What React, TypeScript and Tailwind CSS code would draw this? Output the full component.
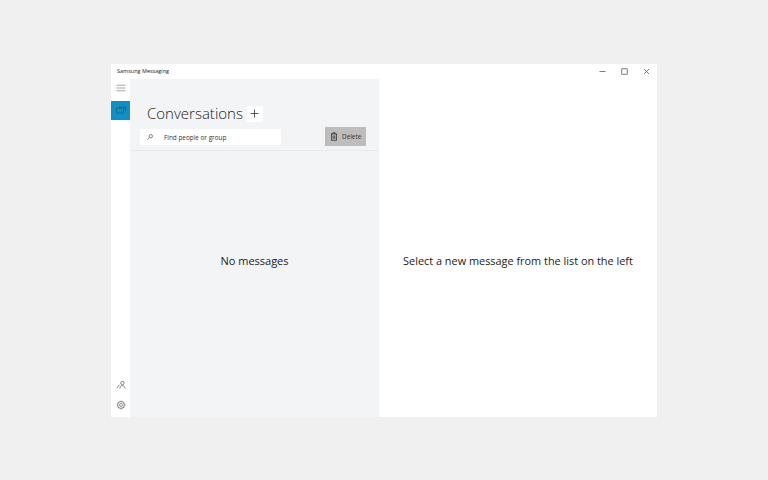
import React from "react";

export default function App() {
  return (
    <div className="w-[768px] h-[480px] bg-[#f0f0f0] flex items-start justify-start pt-[64px] pl-[111px] overflow-hidden font-['Open_Sans',sans-serif]">
      <div className="w-[546px] h-[353px] bg-white flex flex-col">
        {/* Title bar */}
        <div className="h-[15px] flex items-center justify-between shrink-0">
          <span className="ml-[6px] text-[5.5px] leading-none text-[#222]">Samsung Messaging</span>
          <div className="flex items-center h-full">
            <div className="w-[22px] flex justify-center">
              <svg width="7" height="7" viewBox="0 0 7 7"><path d="M0.5 3.5H6.5" stroke="#444" strokeWidth="0.7" /></svg>
            </div>
            <div className="w-[22px] flex justify-center">
              <svg width="7" height="7" viewBox="0 0 7 7"><rect x="0.8" y="0.8" width="5.4" height="5.4" fill="none" stroke="#444" strokeWidth="0.7" /></svg>
            </div>
            <div className="w-[22px] flex justify-center">
              <svg width="7" height="7" viewBox="0 0 7 7"><path d="M1 1L6 6M6 1L1 6" stroke="#444" strokeWidth="0.7" /></svg>
            </div>
          </div>
        </div>
        {/* Body */}
        <div className="flex-1 flex min-h-0">
          {/* Rail */}
          <div className="w-[19px] shrink-0 flex flex-col items-center">
            <div className="h-[18px] w-full flex items-center justify-center">
              <svg width="10" height="8" viewBox="0 0 10 8"><path d="M0.5 1.2H9.5M0.5 4H9.5M0.5 6.8H9.5" stroke="#666" strokeWidth="0.6" /></svg>
            </div>
            <div className="mt-[4px] h-[19px] w-full bg-[#0f8fc4] flex items-center justify-center">
              <svg width="10" height="9" viewBox="0 0 10 9">
                <rect x="0.6" y="2.2" width="6.8" height="5" rx="0.5" fill="none" stroke="#1f5f7d" strokeWidth="0.8" />
                <path d="M2.6 1H9.4V5.4" fill="none" stroke="#1f5f7d" strokeWidth="0.8" />
              </svg>
            </div>
            <div className="mt-auto h-[20px] w-full flex items-center justify-center">
              <svg width="10" height="10" viewBox="0 0 10 10" fill="none" stroke="#666" strokeWidth="0.8">
                <circle cx="6.4" cy="3" r="1.7" />
                <path d="M3.8 8.6C4 6.6 5 5.6 6.4 5.6S8.8 6.6 9 8.6" />
                <path d="M0.8 8.2L3.4 4.8" />
              </svg>
            </div>
            <div className="h-[20px] mb-[2px] w-full flex items-center justify-center">
              <svg width="10" height="10" viewBox="0 0 10 10" fill="none" stroke="#666">
                <circle cx="5" cy="5" r="3.4" strokeWidth="0.8" />
                <circle cx="5" cy="5" r="1.5" strokeWidth="0.7" />
                <circle cx="5" cy="5" r="4" strokeWidth="0.6" strokeDasharray="1.05 1.05" />
              </svg>
            </div>
          </div>
          {/* Conversations panel */}
          <div className="w-[249px] shrink-0 bg-[#f3f4f6] flex flex-col">
            <div className="h-[72px] border-b border-[#e8e9eb] shrink-0 flex flex-col">
              <div className="flex items-center pl-[17px] pt-[23px]">
                <span className="text-[15px] leading-[23px] font-light text-[#222]">Conversations</span>
                <div className="ml-[4px] w-[16px] h-[16px] bg-white flex items-center justify-center">
                  <svg width="9" height="9" viewBox="0 0 9 9"><path d="M4.5 0.5V8.5M0.5 4.5H8.5" stroke="#333" strokeWidth="0.8" /></svg>
                </div>
              </div>
              <div className="flex items-start justify-between pl-[10px] pr-[13px] mt-[2px]">
                <div className="w-[141px] h-[16px] mt-[2px] bg-white flex items-center pl-[7px]">
                  <svg width="6" height="6" viewBox="0 0 6 6" fill="none" stroke="#555" strokeWidth="0.7"><circle cx="3.8" cy="2.2" r="1.7" /><path d="M2.6 3.4L0.5 5.5" /></svg>
                  <span className="ml-[11px] mt-[2px] text-[6.4px] leading-none text-[#333]">Find people or group</span>
                </div>
                <div className="w-[41px] h-[19px] bg-[#bdbdbd] flex items-center pl-[5px]">
                  <svg width="8" height="9" viewBox="0 0 8 9" fill="none" stroke="#333" strokeWidth="0.8">
                    <path d="M0.8 2H7.2M2.8 2V0.8H5.2V2M1.5 2V8.3H6.5V2M3.2 3.5V6.9M4.8 3.5V6.9" />
                  </svg>
                  <span className="ml-[4px] mt-[1px] text-[6.4px] leading-none text-[#333]">Delete</span>
                </div>
              </div>
            </div>
            <div className="flex-1 flex items-center justify-center pb-[46px]">
              <span className="text-[11px] text-[#222]">No messages</span>
            </div>
          </div>
          {/* Detail */}
          <div className="flex-1 flex items-center justify-center pt-[26px]">
            <span className="text-[10.9px] text-[#222]">Select a new message from the list on the left</span>
          </div>
        </div>
      </div>
    </div>
  );
}
